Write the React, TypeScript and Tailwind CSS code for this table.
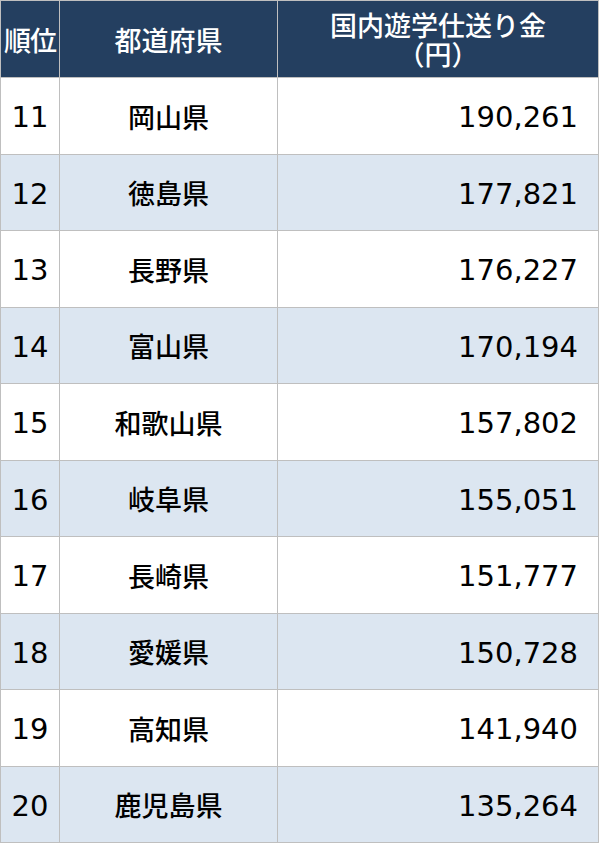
import React from "react";

const rows = [
  { rank: 11, pref: "岡山県", amount: "190,261" },
  { rank: 12, pref: "徳島県", amount: "177,821" },
  { rank: 13, pref: "長野県", amount: "176,227" },
  { rank: 14, pref: "富山県", amount: "170,194" },
  { rank: 15, pref: "和歌山県", amount: "157,802" },
  { rank: 16, pref: "岐阜県", amount: "155,051" },
  { rank: 17, pref: "長崎県", amount: "151,777" },
  { rank: 18, pref: "愛媛県", amount: "150,728" },
  { rank: 19, pref: "高知県", amount: "141,940" },
  { rank: 20, pref: "鹿児島県", amount: "135,264" },
];

// digits in the picture are wide (Meiryo-like), DejaVu Sans has about the same widths
const numFont = { fontFamily: '"DejaVu Sans", "Noto Sans CJK JP", sans-serif' };

const App = () => {
  return (
    <div
      className="w-[600px] h-[843px] bg-white"
      style={{ fontFamily: '"Noto Sans CJK JP", "Noto Sans", sans-serif' }}
    >
      <table className="border-collapse w-[599px] table-fixed text-[27px] text-black">
        <colgroup>
          <col className="w-[59px]" />
          <col className="w-[218px]" />
          <col />
        </colgroup>
        <thead>
          <tr className="h-[77px] bg-[#243f60] text-white">
            <th className="border border-[#bfbfbf] p-0 font-medium leading-none tracking-[-1px]">順位</th>
            <th className="border border-[#bfbfbf] p-0 font-medium leading-none">都道府県</th>
            <th className="border border-[#bfbfbf] p-0 font-medium">
              <div className="leading-[30px]">国内遊学仕送り金</div>
              <div className="leading-[30px] -mt-[1px]">（円）</div>
            </th>
          </tr>
        </thead>
        <tbody>
          {rows.map((r, i) => (
            <tr
              key={r.rank}
              className={i % 2 === 1 ? "h-[76.5px] bg-[#dce6f1]" : "h-[76.5px] bg-white"}
            >
              <td className="border border-[#bfbfbf] p-0 pt-[4px] text-center text-[29px] leading-none" style={numFont}>
                {r.rank}
              </td>
              <td className="border border-[#bfbfbf] p-0 pt-[1px] text-center font-medium leading-none">{r.pref}</td>
              <td className="border border-[#bfbfbf] p-0 pt-[4px] pr-[20px] text-right text-[29px] leading-none" style={numFont}>
                {r.amount}
              </td>
            </tr>
          ))}
        </tbody>
      </table>
    </div>
  );
};

export default App;
